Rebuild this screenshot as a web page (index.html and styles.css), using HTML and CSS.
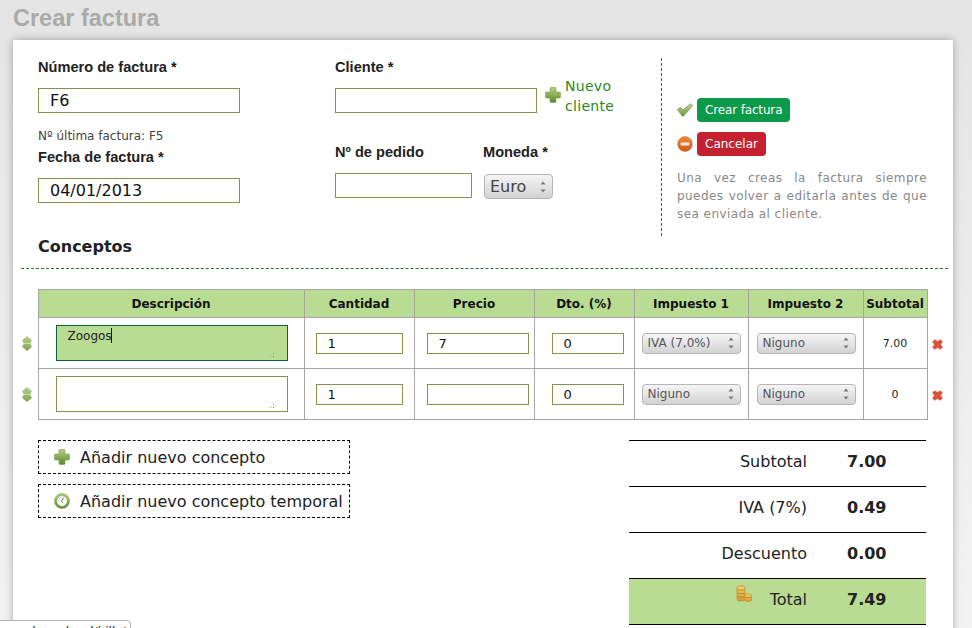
FILE: index.html
```html
<!DOCTYPE html>
<html lang="es">
<head>
  <meta charset="UTF-8">
  <title>Crear factura</title>
  <link rel="stylesheet" href="styles.css">
</head>
<body>
  <svg class="defs" aria-hidden="true">
    <defs>
      <linearGradient id="gGreen" x1="0" y1="0" x2="0" y2="1">
        <stop offset="0" stop-color="#b4d07c"/>
        <stop offset="1" stop-color="#5c8a30"/>
      </linearGradient>
      <linearGradient id="gCheck" x1="0" y1="0" x2="0" y2="1">
        <stop offset="0" stop-color="#c3d892"/>
        <stop offset="1" stop-color="#6f9440"/>
      </linearGradient>
      <linearGradient id="gPale" x1="0" y1="0" x2="0" y2="1">
        <stop offset="0" stop-color="#b5d08c"/>
        <stop offset="1" stop-color="#7fa455"/>
      </linearGradient>
      <linearGradient id="gOrange" x1="0" y1="0" x2="0" y2="1">
        <stop offset="0" stop-color="#ee8a3c"/>
        <stop offset="1" stop-color="#d2561a"/>
      </linearGradient>
      <linearGradient id="gGold" x1="0" y1="0" x2="0" y2="1">
        <stop offset="0" stop-color="#f3d27a"/>
        <stop offset="1" stop-color="#d79a2c"/>
      </linearGradient>
      <symbol id="iPlus" viewBox="0 0 16 16">
        <path d="M6 .5h4a1 1 0 0 1 1 1V5h3.500a1 1 0 0 1 1 1v4a1 1 0 0 1-1 1H11v3.500a1 1 0 0 1-1 1H6a1 1 0 0 1-1-1V11H1.500a1 1 0 0 1-1-1V6a1 1 0 0 1 1-1H5V1.500a1 1 0 0 1 1-1z" fill="url(#gGreen)" stroke="#7d9a4a" stroke-width=".6"/>
      </symbol>
      <symbol id="iCheck" viewBox="0 0 16 16">
        <path d="M.3 7.500l2.800-2 3 2.300L13.400 1.800 15.800 3.600 6.400 14.200h-1z" fill="url(#gCheck)" stroke="#7d9158" stroke-width=".7"/>
      </symbol>
      <symbol id="iMinus" viewBox="0 0 16 16">
        <circle cx="8" cy="8" r="7.400" fill="url(#gOrange)" stroke="#c9772f" stroke-width=".6"/>
        <rect x="3.500" y="6.500" width="9" height="3" rx="1" fill="#fbeee0"/>
      </symbol>
      <symbol id="iClock" viewBox="0 0 16 16">
        <circle cx="8" cy="8" r="7.600" fill="url(#gGreen)" stroke="#7d9a4a" stroke-width=".5"/>
        <circle cx="8" cy="8" r="5.400" fill="#f6f8f0" stroke="#6c8448" stroke-width=".5"/>
        <path d="M9.500 5L7.500 8.300 9 9.800" fill="none" stroke="#5a6b48" stroke-width=".9"/>
      </symbol>
      <symbol id="iMove" viewBox="0 0 10 15">
        <path d="M5 0l5 4.200-2 3.300 2 3.300L5 15 0 10.800l2-3.300-2-3.300z" fill="url(#gPale)"/>
        <path d="M1 7.500h8" stroke="#d6e4c0" stroke-width=".8"/>
      </symbol>
      <symbol id="iDelete" viewBox="0 0 12 12">
        <path d="M3 .5L6 2.500 9 .5 11.700 3 9.500 6l2.200 3L9 11.500 6 9.500 3 11.500.3 9 2.500 6 .3 3z" fill="#d8523c" stroke="#e58a78" stroke-width=".4"/>
      </symbol>
      <symbol id="iCoins" viewBox="0 0 16 18">
        <rect x="1" y="1" width="8" height="15" rx="2" fill="url(#gGold)" stroke="#c98f2a" stroke-width=".8"/>
        <path d="M1.500 5h7M1.500 8.500h7M1.500 12h7" stroke="#b97f20" stroke-width=".8"/>
        <rect x="9" y="9" width="6.500" height="7.500" rx="2" fill="url(#gGold)" stroke="#c98f2a" stroke-width=".8"/>
        <path d="M9.500 12.500h5.500" stroke="#b97f20" stroke-width=".8"/>
      </symbol>
      <symbol id="iArrows" viewBox="0 0 8 14">
        <path d="M4 1.500L6.500 4.500H1.500z" fill="#777"/>
        <path d="M1.500 9.500h5L4 12.500z" fill="#777"/>
      </symbol>
    </defs>
  </svg>

  <div class="page">
    <h1 class="page-title">Crear factura</h1>

    <div class="panel">
      <div class="top">
        <div class="col-number">
          <label class="label">Número de factura *</label>
          <input class="text wide big" type="text" value="F6">
          <p class="hint">Nº última factura: F5</p>
          <label class="label">Fecha de factura *</label>
          <input class="text wide big" type="text" value="04/01/2013">
        </div>

        <div class="col-client">
          <label class="label">Cliente *</label>
          <div class="client-row">
            <input class="text wide" type="text">
            <svg class="icon new-icon"><use href="#iPlus"/></svg>
            <a class="new-client" href="#">Nuevo<br>cliente</a>
          </div>
          <div class="order-row">
            <div class="order-field">
              <label class="label">Nº de pedido</label>
              <input class="text order" type="text">
            </div>
            <div class="currency-field">
              <label class="label">Moneda *</label>
              <span class="select currency">
                <select><option>Euro</option></select>
                <svg class="arrows"><use href="#iArrows"/></svg>
              </span>
            </div>
          </div>
        </div>

        <div class="col-actions">
          <div class="action">
            <svg class="icon"><use href="#iCheck"/></svg>
            <button class="btn btn-green">Crear factura</button>
          </div>
          <div class="action">
            <svg class="icon"><use href="#iMinus"/></svg>
            <button class="btn btn-red">Cancelar</button>
          </div>
          <p class="note">Una vez creas la factura siempre puedes volver a editarla antes de que sea enviada al cliente.</p>
        </div>
      </div>

      <h2 class="section">Conceptos</h2>

      <table class="lines">
        <colgroup>
          <col class="c-move"><col class="c-desc"><col class="c-qty"><col class="c-price">
          <col class="c-disc"><col class="c-tax1"><col class="c-tax2"><col class="c-sub"><col class="c-del">
        </colgroup>
        <thead>
          <tr>
            <td class="side"></td>
            <th>Descripción</th>
            <th>Cantidad</th>
            <th>Precio</th>
            <th>Dto. (%)</th>
            <th>Impuesto 1</th>
            <th>Impuesto 2</th>
            <th>Subtotal</th>
            <td class="side"></td>
          </tr>
        </thead>
        <tbody>
          <tr>
            <td class="side"><svg class="move"><use href="#iMove"/></svg></td>
            <td>
              <div class="desc">
                <textarea class="desc-input focused">Zoogos</textarea>
                <span class="caret"></span>
                <span class="grip"></span>
              </div>
            </td>
            <td><input class="text cell qty" type="text" value="1"></td>
            <td><input class="text cell price" type="text" value="7"></td>
            <td><input class="text cell disc" type="text" value="0"></td>
            <td>
              <span class="select tax tax1">
                <select><option>IVA (7,0%)</option></select>
                <svg class="arrows"><use href="#iArrows"/></svg>
              </span>
            </td>
            <td>
              <span class="select tax tax2">
                <select><option>Niguno</option></select>
                <svg class="arrows"><use href="#iArrows"/></svg>
              </span>
            </td>
            <td class="sub">7.00</td>
            <td class="side"><svg class="del"><use href="#iDelete"/></svg></td>
          </tr>
          <tr>
            <td class="side"><svg class="move"><use href="#iMove"/></svg></td>
            <td>
              <div class="desc">
                <textarea class="desc-input"></textarea>
                <span class="grip"></span>
              </div>
            </td>
            <td><input class="text cell qty" type="text" value="1"></td>
            <td><input class="text cell price" type="text"></td>
            <td><input class="text cell disc" type="text" value="0"></td>
            <td>
              <span class="select tax tax1">
                <select><option>Niguno</option></select>
                <svg class="arrows"><use href="#iArrows"/></svg>
              </span>
            </td>
            <td>
              <span class="select tax tax2">
                <select><option>Niguno</option></select>
                <svg class="arrows"><use href="#iArrows"/></svg>
              </span>
            </td>
            <td class="sub">0</td>
            <td class="side"><svg class="del"><use href="#iDelete"/></svg></td>
          </tr>
        </tbody>
      </table>

      <div class="bottom">
        <div class="add-list">
          <a class="add" href="#"><svg class="icon"><use href="#iPlus"/></svg>Añadir nuevo concepto</a>
          <a class="add" href="#"><svg class="icon"><use href="#iClock"/></svg>Añadir nuevo concepto temporal</a>
        </div>
        <div class="totals">
          <div class="total-row"><span class="total-label">Subtotal</span><b>7.00</b></div>
          <div class="total-row"><span class="total-label">IVA (7%)</span><b>0.49</b></div>
          <div class="total-row"><span class="total-label">Descuento</span><b>0.00</b></div>
          <div class="total-row grand">
            <span class="total-label"><svg class="coins"><use href="#iCoins"/></svg>Total</span><b>7.49</b>
          </div>
        </div>
      </div>
    </div>

    <div class="status">demo.local/bills/new/</div>
  </div>
</body>
</html>
```

FILE: styles.css
```css
html, body {
  margin: 0;
  padding: 0;
}
body {
  font-family: "DejaVu Sans", sans-serif;
  color: #222;
  background: #e8e8e8;
}
.defs {
  position: absolute;
  width: 0;
  height: 0;
}
.page {
  position: relative;
  height: 628px;
  overflow: hidden;
  background: linear-gradient(#e4e4e4, #f3f3f3);
}
.page-title {
  margin: 0;
  height: 40px;
  padding: 5px 0 0 13px;
  box-sizing: border-box;
  font: bold 23.500px/27px "Liberation Sans", Arial, sans-serif;
  color: #aaa;
}
.panel {
  width: 940px;
  height: 620px;
  margin-left: 13px;
  padding: 18px 5px 0 8px;
  box-sizing: border-box;
  background: white;
  box-shadow: 0 0 8px rgba(0, 0, 0, 0.3);
}

/* top form */
.top {
  display: flex;
  height: 178px;
  padding-left: 17px;
}
.col-number {
  width: 297px;
}
.col-client {
  width: 326px;
}
.col-actions {
  width: 266px;
  padding: 40px 0 0 15px;
  box-sizing: border-box;
  border-left: 1px dashed #1f7a1f;
}
.label {
  display: block;
  height: 18px;
  font: bold 14.600px/18px "Liberation Sans", Arial, sans-serif;
  color: #222;
}
.text {
  display: block;
  box-sizing: border-box;
  height: 25px;
  margin: 12px 0 0;
  padding: 0 11px;
  border: 1px solid #8a9150;
  border-radius: 0;
  outline: none;
  background: white;
  font: 16px "DejaVu Sans", sans-serif;
  color: #111;
}
.wide {
  width: 202px;
}
.hint {
  margin: 16px 0 5px;
  font-size: 12px;
  line-height: 14px;
  color: #444;
}
.client-row {
  display: flex;
  align-items: flex-start;
}
.new-icon {
  margin: 11px 4px 0 8px;
}
.new-client {
  font-size: 14px;
  line-height: 20px;
  letter-spacing: 0.3px;
  color: #1f8a1f;
  text-decoration: none;
}
.order-row {
  display: flex;
  margin-top: 27px;
  gap: 11px;
}
.order {
  width: 137px;
}
.currency-field .label {
  margin-bottom: 13px;
}
.icon {
  display: block;
  flex: none;
  width: 16px;
  height: 16px;
}

/* selects */
.select {
  position: relative;
  display: block;
}
.select select {
  display: block;
  box-sizing: border-box;
  width: 100%;
  height: 100%;
  padding: 0 0 0 5px;
  appearance: none;
  border: 1px solid #b5b5b5;
  border-radius: 4px;
  background: linear-gradient(#f5f5f5, #d2d2d2);
  font: 12px "DejaVu Sans", sans-serif;
  color: #555;
}
.arrows {
  position: absolute;
  top: 50%;
  right: 6px;
  width: 8px;
  height: 14px;
  margin-top: -7px;
  pointer-events: none;
}
.currency {
  width: 69px;
  height: 25px;
  margin-left: 1px;
}
.currency select {
  font-size: 16px;
  color: #444;
}
.tax {
  height: 21px;
}
.tax1 {
  width: 99px;
  margin-left: 7px;
}
.tax2 {
  width: 99px;
  margin-left: 8px;
}

/* actions */
.action {
  display: flex;
  align-items: center;
  gap: 4px;
  margin-bottom: 10px;
}
.btn {
  height: 24px;
  padding: 0 8px;
  border: none;
  border-radius: 4px;
  font: 12px "DejaVu Sans", sans-serif;
  white-space: nowrap;
  color: white;
}
.btn-green {
  letter-spacing: -0.15px;
  background-color: #0a9a4a;
}
.btn-red {
  background-color: #c4202f;
}
.note {
  margin: 13px 0 0;
  width: 250px;
  font-size: 12px;
  line-height: 18px;
  letter-spacing: 0.45px;
  text-align: justify;
  color: #888;
}

/* concepts table */
.section {
  margin: 0;
  padding: 1px 0 11px 17px;
  border-bottom: 1px dashed #1f7a1f;
  font-size: 16px;
  line-height: 20px;
  color: #222;
}
.lines {
  width: 927px;
  margin-top: 20px;
  table-layout: fixed;
  border-collapse: collapse;
}
.c-move { width: 17px; }
.c-desc { width: 266px; }
.c-qty { width: 110px; }
.c-price { width: 120px; }
.c-disc { width: 100px; }
.c-tax1 { width: 114px; }
.c-tax2 { width: 115px; }
.c-sub { width: 64px; }
.c-del { width: 21px; }
.lines th, .lines td {
  padding: 0;
  border: 1px solid #a5a5a5;
}
.lines th {
  height: 27px;
  background: #b8dd92;
  font-size: 12px;
  color: #111;
}
.lines td {
  height: 50px;
}
.lines thead td {
  height: 27px;
}
.lines td.side {
  border-top: none;
  border-bottom: none;
  border-left: none;
  text-align: center;
}
.lines td:last-child {
  border-right: none;
}
.move {
  display: block;
  width: 10px;
  height: 15px;
  margin: 1px 0 0 1px;
}
.del {
  display: block;
  width: 11px;
  height: 11px;
  margin: 2px 0 0 4px;
}
.desc {
  position: relative;
  width: 232px;
  height: 36px;
  margin-left: 17px;
}
.desc-input {
  display: block;
  box-sizing: border-box;
  width: 100%;
  height: 100%;
  padding: 3px 11px;
  resize: none;
  outline: none;
  border: 1px solid #8a9150;
  border-radius: 0;
  background: white;
  font: 12px/15px "DejaVu Sans", sans-serif;
  color: #222;
}
.desc-input.focused {
  border-color: #0f5e3c;
  background: #b8dd92;
}
.caret {
  position: absolute;
  left: 55px;
  top: 3px;
  width: 1px;
  height: 15px;
  background: #111;
}
/* textarea resize dots */
.grip {
  position: absolute;
  right: 14px;
  bottom: 4px;
  width: 1px;
  height: 1px;
  background: #777;
  box-shadow: -3px 0 0 #999, 0 -3px 0 #999;
}
.cell {
  height: 21px;
  margin: 0;
  font-size: 13px;
}
.qty {
  width: 87px;
  margin-left: 11px;
}
.price {
  width: 102px;
  margin-left: 12px;
}
.disc {
  width: 72px;
  margin-left: 17px;
}
.sub {
  text-align: center;
  font-size: 11px;
  color: #222;
}

/* bottom */
.bottom {
  display: flex;
  justify-content: space-between;
  margin-top: 20px;
  padding: 0 22px 0 17px;
}
.add-list {
  width: 312px;
}
.add {
  display: flex;
  align-items: center;
  gap: 10px;
  height: 34px;
  margin-bottom: 10px;
  padding-left: 15px;
  box-sizing: border-box;
  border: 1px dashed #000;
  font-size: 16px;
  color: #222;
  text-decoration: none;
}
.totals {
  width: 297px;
}
.total-row {
  display: flex;
  gap: 40px;
  box-sizing: border-box;
  height: 46px;
  padding-top: 11px;
  border-top: 1px solid #000;
  font-size: 16px;
  line-height: 19px;
}
.total-row:last-child {
  height: 47px;
  border-bottom: 1px solid #000;
}
.total-label {
  display: flex;
  justify-content: flex-end;
  width: 178px;
}
.grand {
  background: #b8dd92;
}
.coins {
  width: 16px;
  height: 18px;
  margin: -5px 18px 0 0;
}
.status {
  position: absolute;
  left: -1px;
  top: 620px;
  width: 132px;
  height: 20px;
  padding: 4px 0 0 28px;
  box-sizing: border-box;
  border: 1px solid #b0b0b0;
  border-radius: 0 4px 0 0;
  background: white;
  font-size: 12px;
  white-space: nowrap;
  overflow: hidden;
  color: #222;
}
```
